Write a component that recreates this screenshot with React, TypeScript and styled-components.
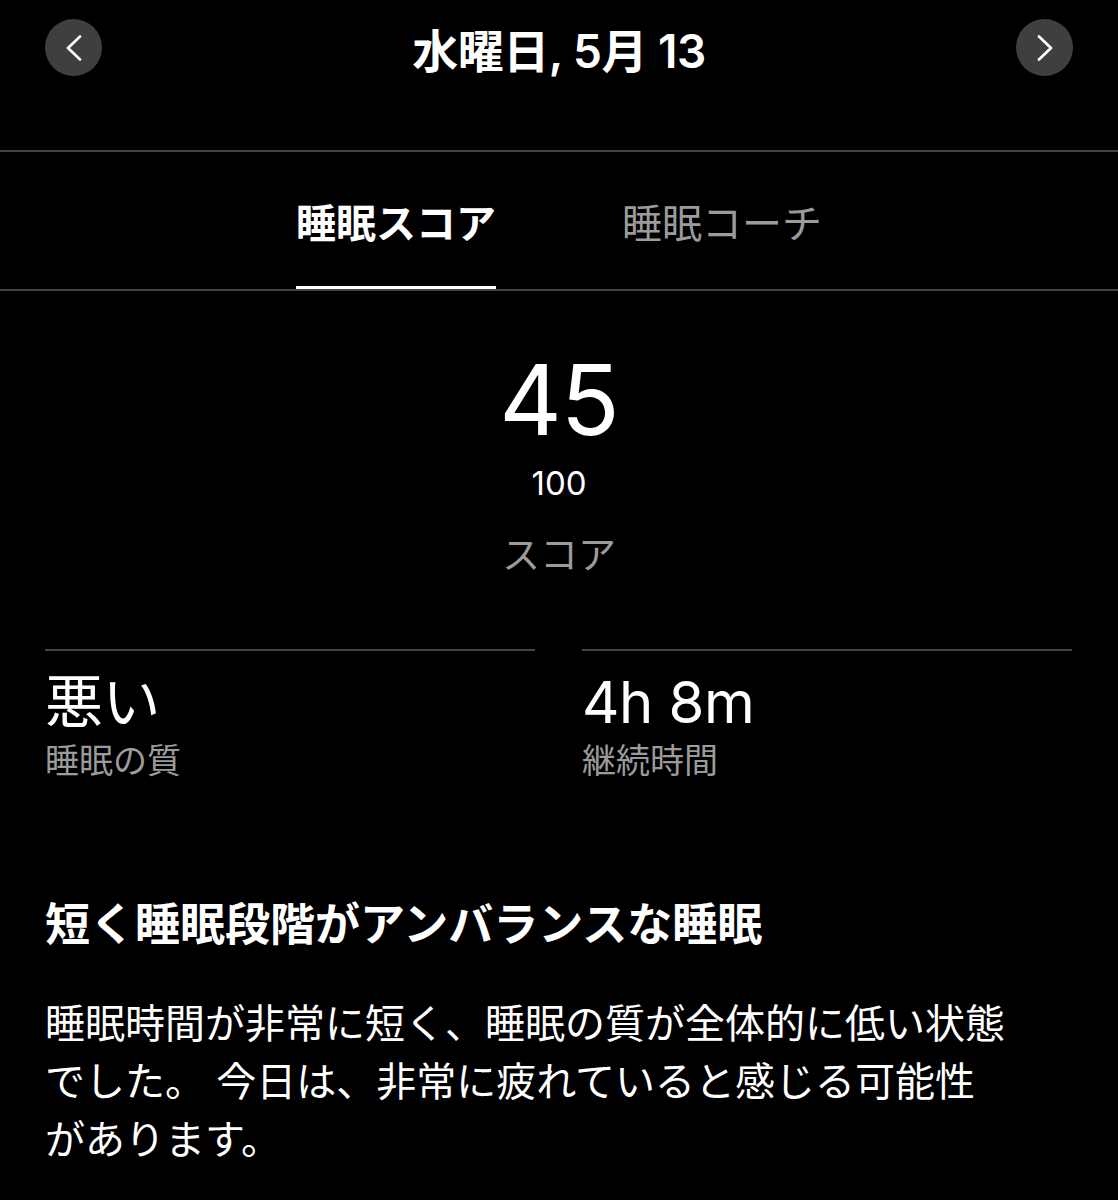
import React from "react";
import styled, { createGlobalStyle } from "styled-components";

const divider = "#434343";
const muted = "#9b9b9b";

const GlobalStyle = createGlobalStyle`
    body {
        margin: 0;
        background: #000;
        color: #fff;
        font-family: "Inter", "Noto Sans CJK JP", sans-serif;
    }
`;

const Chevron = ({ dir } : { dir : "left" | "right" }) => (
    <svg width="16" height="26" viewBox="0 0 16 26" fill="none">
        <path
            d={ dir === "left" ? "M14 1.5 2 13l12 11.5" : "M2 1.5 14 13 2 24.5" }
            stroke="#fff"
            strokeWidth="2.6"
            strokeLinecap="round"
            strokeLinejoin="round"
        />
    </svg>
);

const stats = [
    { value: "悪い", label: "睡眠の質" },
    { value: "4h 8m", label: "継続時間" },
];

export default function App() {
    return (
        <Page>
            <GlobalStyle />
            <DateBar>
                <NavButton aria-label="前の日"><Chevron dir="left" /></NavButton>
                <DateTitle>水曜日, 5月 13</DateTitle>
                <NavButton aria-label="次の日"><Chevron dir="right" /></NavButton>
            </DateBar>
            <TabBar>
                <Tab $active>睡眠スコア</Tab>
                <Tab>睡眠コーチ</Tab>
            </TabBar>
            <ScoreBlock>
                <Score>45</Score>
                <ScoreMax>100</ScoreMax>
                <ScoreLabel>スコア</ScoreLabel>
            </ScoreBlock>
            <StatsRow>
                { stats.map(s => (
                    <Stat key={ s.label }>
                        <StatValue>{ s.value }</StatValue>
                        <StatLabel>{ s.label }</StatLabel>
                    </Stat>
                )) }
            </StatsRow>
            <Summary>
                <SummaryTitle>短く睡眠段階がアンバランスな睡眠</SummaryTitle>
                <SummaryText>
                    睡眠時間が非常に短く、睡眠の質が全体的に低い状態<br />
                    でした。 今日は、非常に疲れていると感じる可能性<br />
                    があります。
                </SummaryText>
            </Summary>
        </Page>
    );
}

const Page = styled.div`
    width: 1118px;
    min-height: 1200px;
    background: #000;
`;
const DateBar = styled.header`
    box-sizing: border-box;
    height: 152px;
    padding: 19px 45px 0;
    display: flex;
    align-items: flex-start;
    justify-content: space-between;
    border-bottom: 2px solid ${divider};
`;
const NavButton = styled.button`
    width: 57px;
    height: 57px;
    border-radius: 50%;
    border: none;
    padding: 0;
    background: #3f3f3f;
    display: flex;
    align-items: center;
    justify-content: center;
`;
const DateTitle = styled.h1`
    margin: 0;
    height: 57px;
    display: flex;
    align-items: center;
    font-size: 46px;
    font-weight: 600;
    letter-spacing: -0.5px;
`;
const TabBar = styled.nav`
    box-sizing: border-box;
    height: 139px;
    display: flex;
    justify-content: center;
    gap: 126px;
    border-bottom: 2px solid ${divider};
`;
const Tab = styled.div<{ $active? : boolean }>`
    display: flex;
    align-items: center;
    padding-top: 3px;
    font-size: 40px;
    font-weight: ${p => p.$active ? 700 : 400};
    color: ${p => p.$active ? "#fff" : muted};
    border-bottom: 3px solid ${p => p.$active ? "#fff" : "transparent"};
`;
const ScoreBlock = styled.section`
    display: flex;
    flex-direction: column;
    align-items: center;
    padding-top: 60px;
`;
const Score = styled.div`
    font-size: 97px;
    line-height: 97px;
    font-weight: 400;
    letter-spacing: -1px;
`;
const ScoreMax = styled.div`
    margin-top: 19px;
    font-size: 33px;
    line-height: 33px;
`;
const ScoreLabel = styled.div`
    margin-top: 35px;
    font-size: 38px;
    line-height: 38px;
    color: ${muted};
`;
const StatsRow = styled.section`
    display: grid;
    grid-template-columns: 1fr 1fr;
    gap: 47px;
    padding: 0 46px 0 45px;
    margin-top: 76px;
`;
const Stat = styled.div`
    border-top: 2px solid ${divider};
    padding-top: 20px;
`;
const StatValue = styled.div`
    font-size: 58px;
    line-height: 62px;
    letter-spacing: -0.5px;
`;
const StatLabel = styled.div`
    margin-top: 8px;
    font-size: 34px;
    line-height: 40px;
    color: ${muted};
`;
const Summary = styled.section`
    padding: 0 45px;
    margin-top: 116px;
`;
const SummaryTitle = styled.h2`
    margin: 0;
    font-size: 45px;
    line-height: 56px;
    font-weight: 600;
`;
const SummaryText = styled.p`
    margin: 42px 0 0;
    font-size: 40px;
    line-height: 58px;
`;
